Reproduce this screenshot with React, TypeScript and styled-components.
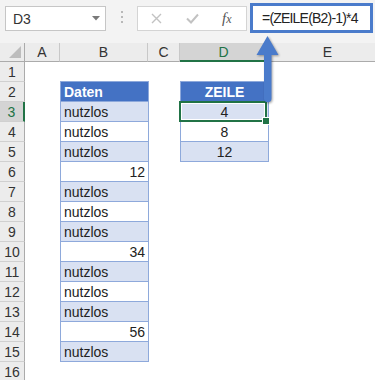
import {FC} from "react";
import styled, {createGlobalStyle, css} from "styled-components";

const GlobalStyle = createGlobalStyle`
  body {
    margin: 0;
    background: #ffffff;
    font-family: "Liberation Sans", Arial, sans-serif;
    overflow: hidden;
  }
`

const Page = styled.div`
  position: relative;
  width: 375px;
  height: 380px;
  overflow: hidden;
  background: #ffffff;
`

const Toolbar = styled.div`
  display: flex;
  align-items: flex-start;
  height: 43px;
  box-sizing: border-box;
  padding: 3px 0 0 5px;
  background: #f3f3f3;
`

const NameBox = styled.div`
  display: flex;
  align-items: center;
  justify-content: space-between;
  box-sizing: border-box;
  width: 101px;
  height: 25px;
  margin-top: 3px;
  padding: 0 5px 0 7px;
  background: #ffffff;
  border: 1px solid #c6c6c6;
  font-size: 14px;
  color: #333333;
`

const Dots = styled.div`
  margin: 7px 0 0 14px;
  width: 4px;
  height: 14px;
`

const ButtonBox = styled.div`
  display: flex;
  align-items: center;
  box-sizing: border-box;
  width: 110px;
  height: 25px;
  margin: 3px 0 0 13px;
  padding: 0 0 0 13px;
  background: #ffffff;
  border: 1px solid #d4d4d4;
  gap: 24px;
`

const Fx = styled.span`
  font-family: "Liberation Serif", "Times New Roman", serif;
  font-style: italic;
  font-size: 15px;
  color: #555555;
  margin-left: -1px;

  small {
    font-size: 12px;
  }
`

const FormulaBox = styled.div`
  display: flex;
  align-items: center;
  box-sizing: border-box;
  width: 123px;
  height: 30px;
  margin-left: 3px;
  padding-left: 9px;
  background: #ffffff;
  border: 3px solid #4a7bcb;
  font-size: 14px;
  letter-spacing: -0.8px;
  color: #222222;
  white-space: nowrap;
`

const Sheet = styled.div`
  display: grid;
  grid-template-columns: 25px 35px 88px 32px 88px 120px;
  grid-template-rows: 19px;
  grid-auto-rows: 20px;
  font-size: 14px;
  color: #222222;
`

const headerBase = css`
  display: flex;
  align-items: center;
  justify-content: center;
  box-sizing: border-box;
  background: #ececec;
  color: #333333;
`

const Corner = styled.div`
  ${headerBase};
  justify-content: flex-end;
  align-items: flex-end;
  padding: 0 3px 3px 0;
  border-right: 1px solid #ababab;
  border-bottom: 1px solid #ababab;
`

const ColHeader = styled.div<{ $active?: boolean }>`
  ${headerBase};
  border-right: 1px solid #c8c8c8;
  border-bottom: 1px solid #ababab;
  ${p => p.$active && css`
    background: #d4d4d4;
    color: #217346;
    border-bottom: 2px solid #217346;
  `}
`

const RowHeader = styled.div<{ $active?: boolean }>`
  ${headerBase};
  border-right: 1px solid #ababab;
  border-bottom: 1px solid #d0d0d0;
  ${p => p.$active && css`
    background: #d4d4d4;
    color: #217346;
    border-right: 2px solid #217346;
  `}
`

type Kind = 'head' | 'band' | 'white'
type Align = 'left' | 'right' | 'center'

const justify: Record<Align, string> = {left: 'flex-start', right: 'flex-end', center: 'center'}

const Cell = styled.div<{ $kind?: Kind; $align?: Align; $selected?: boolean }>`
  display: flex;
  align-items: center;
  justify-content: ${p => justify[p.$align || 'left']};
  box-sizing: border-box;
  padding: 1px 3px 0;
  white-space: nowrap;
  overflow: visible;

  ${p => p.$kind && css`
    border: 1px solid #8ea9db;
    margin-top: -1px;
    margin-right: -1px;
    background: ${p.$kind === 'band' ? '#d9e1f2' : p.$kind === 'head' ? '#4472c4' : '#ffffff'};
  `}

  ${p => p.$kind === 'head' && css`
    color: #ffffff;
    font-weight: bold;
  `}

  ${p => p.$selected && css`
    position: relative;
    z-index: 1;

    &::after {
      content: "";
      position: absolute;
      top: -1px;
      left: -2px;
      right: 1px;
      bottom: -1px;
      border: 2px solid #217346;
      box-shadow: inset 0 0 0 1px #ffffff;
    }

    &::before {
      content: "";
      position: absolute;
      right: -1px;
      bottom: -3px;
      width: 6px;
      height: 6px;
      background: #217346;
      box-shadow: 0 0 0 1px #ffffff;
      z-index: 2;
    }
  `}
`

const Arrow = styled.svg`
  position: absolute;
  left: 255px;
  top: 34px;
  z-index: 3;
  filter: drop-shadow(1px 1px 1px rgba(0, 0, 0, 0.35));
`

type CellData = { text: string; kind: Kind; align?: Align; selected?: boolean }
type RowData = { n: number; b?: CellData; d?: CellData }

const junk = (n: number): CellData => ({text: 'nutzlos', kind: n % 2 ? 'band' : 'white'})
const num = (text: string): CellData => ({text, kind: 'white', align: 'right'})

const rows: RowData[] = [
    {n: 1},
    {n: 2, b: {text: 'Daten', kind: 'head'}, d: {text: 'ZEILE', kind: 'head', align: 'center'}},
    {n: 3, b: junk(3), d: {text: '4', kind: 'band', align: 'center', selected: true}},
    {n: 4, b: junk(4), d: {text: '8', kind: 'white', align: 'center'}},
    {n: 5, b: junk(5), d: {text: '12', kind: 'band', align: 'center'}},
    {n: 6, b: num('12')},
    {n: 7, b: junk(7)},
    {n: 8, b: junk(8)},
    {n: 9, b: junk(9)},
    {n: 10, b: num('34')},
    {n: 11, b: junk(11)},
    {n: 12, b: junk(12)},
    {n: 13, b: junk(13)},
    {n: 14, b: num('56')},
    {n: 15, b: junk(15)},
    {n: 16},
]

const columns = ['A', 'B', 'C', 'D', 'E']

const renderCell = (data?: CellData) =>
    data ? (
        <Cell $kind={data.kind} $align={data.align} $selected={data.selected}>{data.text}</Cell>
    ) : <Cell/>

const App: FC = () => {
    return (
        <Page>
            <GlobalStyle/>
            <Toolbar>
                <NameBox>
                    D3
                    <svg width="8" height="5" viewBox="0 0 8 5">
                        <path d="M0 0 L8 0 L4 4.5 Z" fill="#7a7a7a"/>
                    </svg>
                </NameBox>
                <Dots>
                    <svg width="4" height="14" viewBox="0 0 4 14">
                        <rect x="1" y="1" width="2" height="2" fill="#b8b8b8"/>
                        <rect x="1" y="6" width="2" height="2" fill="#b8b8b8"/>
                        <rect x="1" y="11" width="2" height="2" fill="#b8b8b8"/>
                    </svg>
                </Dots>
                <ButtonBox>
                    <svg width="11" height="11" viewBox="0 0 11 11">
                        <path d="M1 1 L10 10 M10 1 L1 10" stroke="#c2c2c2" strokeWidth="1.4"/>
                    </svg>
                    <svg width="13" height="11" viewBox="0 0 13 11">
                        <path d="M1 5.5 L5 9.5 L12 1.5" stroke="#c2c2c2" strokeWidth="2" fill="none"/>
                    </svg>
                    <Fx>f<small>x</small></Fx>
                </ButtonBox>
                <FormulaBox>=(ZEILE(B2)-1)*4</FormulaBox>
            </Toolbar>
            <Sheet>
                <Corner>
                    <svg width="12" height="12" viewBox="0 0 12 12">
                        <path d="M12 0 L12 12 L0 12 Z" fill="#bdbdbd"/>
                    </svg>
                </Corner>
                {columns.map((c) => (
                    <ColHeader key={c} $active={c === 'D'}>{c}</ColHeader>
                ))}
                {rows.map((row) => (
                    <div key={row.n} style={{display: 'contents'}}>
                        <RowHeader $active={row.n === 3}>{row.n}</RowHeader>
                        <Cell/>
                        {renderCell(row.b)}
                        <Cell/>
                        {renderCell(row.d)}
                        <Cell/>
                    </div>
                ))}
            </Sheet>
            <Arrow width="26" height="72" viewBox="0 0 26 72">
                <path
                    d="M12.5 2 L23.5 21 L16.5 21 L16.5 64.5 A3.75 3.75 0 0 1 9 64.5 L9 21 L1.5 21 Z"
                    fill="#4a7bcb"
                />
            </Arrow>
        </Page>
    )
}

export default App
